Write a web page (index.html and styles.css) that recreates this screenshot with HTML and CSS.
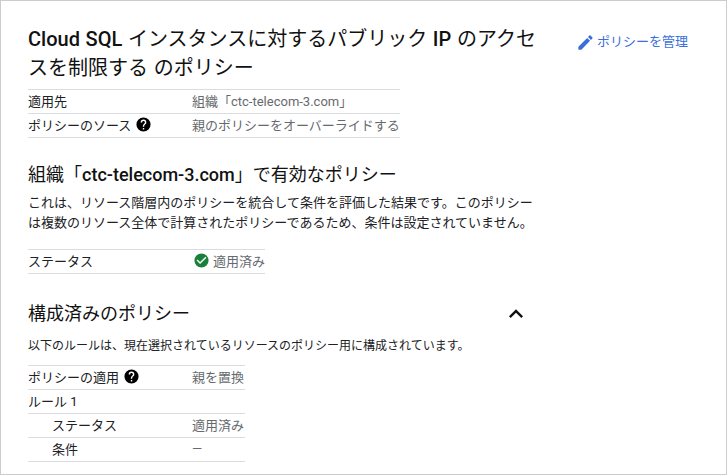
FILE: index.html
```html
<!DOCTYPE html>
<html lang="ja">
<head>
<meta charset="utf-8">
<title>ポリシー</title>
<link rel="stylesheet" href="styles.css">
</head>
<body>
<main class="frame">
  <header class="head">
    <h1 class="title"><b>Cloud SQL</b> インスタンスに対するパブリック <b>IP</b> のアクセスを制限する のポリシー</h1>
    <a class="manage">
      <svg class="pencil" viewBox="0 0 24 24" width="19" height="19"><path d="M3 17.25V21h3.75L17.81 9.94l-3.75-3.75L3 17.25zM20.71 7.04a1 1 0 0 0 0-1.41l-2.34-2.34a1 1 0 0 0-1.41 0l-1.83 1.83 3.75 3.75 1.83-1.83z"/></svg>
      <span>ポリシーを管理</span>
    </a>
  </header>

  <div class="table t1">
    <div class="row"><span class="key">適用先</span><span class="val">組織「ctc-telecom-3.com」</span></div>
    <div class="row"><span class="key">ポリシーのソース
      <svg class="help" viewBox="0 0 24 24" width="17" height="17"><path d="M12 2a10 10 0 1 0 0 20 10 10 0 0 0 0-20zm1 17h-2v-2h2v2zm2.07-7.75-.9.92C13.45 12.9 13 13.5 13 15h-2v-.5c0-1.1.45-2.1 1.17-2.83l1.24-1.26c.37-.36.59-.86.59-1.41 0-1.1-.9-2-2-2s-2 .9-2 2H8a4 4 0 0 1 8 0c0 .88-.36 1.68-.93 2.25z"/></svg></span>
      <span class="val">親のポリシーをオーバーライドする</span></div>
  </div>

  <h2 class="h2 eff">組織「<b>ctc-telecom-3.com</b>」で有効なポリシー</h2>
  <p class="desc">これは、リソース階層内のポリシーを統合して条件を評価した結果です。このポリシーは複数のリソース全体で計算されたポリシーであるため、条件は設定されていません。</p>

  <div class="table t2">
    <div class="row"><span class="key">ステータス</span>
      <span class="val status">
        <svg class="check" viewBox="0 0 24 24" width="17" height="17"><path d="M12 2a10 10 0 1 0 0 20 10 10 0 0 0 0-20zm-2 15-5-5 1.41-1.41L10 14.17l7.59-7.59L19 8l-9 9z"/></svg>
        適用済み</span></div>
  </div>

  <div class="confhead">
    <h2 class="h2">構成済みのポリシー</h2>
    <svg class="chev" viewBox="0 0 24 24" width="28" height="28"><path d="M7.41 15.41 12 10.83l4.59 4.58L18 14l-6-6-6 6z"/></svg>
  </div>
  <p class="desc one">以下のルールは、現在選択されているリソースのポリシー用に構成されています。</p>

  <div class="table t3">
    <div class="row"><span class="key">ポリシーの適用
      <svg class="help" viewBox="0 0 24 24" width="17" height="17"><path d="M12 2a10 10 0 1 0 0 20 10 10 0 0 0 0-20zm1 17h-2v-2h2v2zm2.07-7.75-.9.92C13.45 12.9 13 13.5 13 15h-2v-.5c0-1.1.45-2.1 1.17-2.83l1.24-1.26c.37-.36.59-.86.59-1.41 0-1.1-.9-2-2-2s-2 .9-2 2H8a4 4 0 0 1 8 0c0 .88-.36 1.68-.93 2.25z"/></svg></span>
      <span class="val">親を置換</span></div>
    <div class="row"><span class="key">ルール 1</span></div>
    <div class="row"><span class="key ind">ステータス</span><span class="val">適用済み</span></div>
    <div class="row"><span class="key ind">条件</span><span class="val">—</span></div>
  </div>
</main>
</body>
</html>
```
FILE: styles.css
```css
* { box-sizing: border-box; }
html, body { margin: 0; padding: 0; }
body {
  width: 727px; height: 475px; overflow: hidden; background: #fff;
  font-family: Roboto, "Noto Sans CJK JP", sans-serif;
  color: #202124; font-size: 13px;
}
.frame {
  width: 727px; height: 475px;
  border: 1px solid #ccc;
  padding: 24px 0 0 27px;
}
.head { display: flex; align-items: flex-start; }
.title {
  margin: 0; width: 512px; font-size: 20px; line-height: 29px; font-weight: 400; color: #111;
  word-spacing: 0.7px;
}
.title b, .h2 b { font-weight: 500; }
.manage {
  display: flex; align-items: center; margin: 7px 0 0 36px; gap: 2px;
  color: #3b6fd8; font-size: 13px; line-height: 20px; white-space: nowrap;
}
.pencil { fill: #3b6fd8; flex: none; }
.table { border-top: 1px solid #dadce0; }
.row {
  display: flex; height: 24px; align-items: center; padding-bottom: 2px;
  border-bottom: 1px solid #dadce0; white-space: nowrap;
}
.key { display: flex; align-items: center; gap: 4px; color: #202124; }
.val { color: #666a6e; }
.ind { padding-left: 24px; }
.t1 { width: 372px; margin-top: 6px; }
.t1 .key { width: 164px; }
.t2 { width: 237px; margin-top: 16px; }
.t2 .key { width: 165px; }
.t3 { width: 217px; margin-top: 9px; }
.t3 .key { width: 164px; }
.help { fill: #000; flex: none; }
.status { display: flex; align-items: center; gap: 3px; }
.check { fill: #188038; flex: none; }
.h2 { margin: 0; font-size: 18px; line-height: 24px; font-weight: 400; color: #111; }
.eff { margin-top: 25px; }
.desc { margin: 6px 0 0; width: 510px; line-height: 20px; color: #202124; font-size: 13px; }
.confhead { display: flex; align-items: center; justify-content: space-between; width: 502px; height: 24px; margin-top: 28px; }
.chev { fill: #111; flex: none; }
.one { margin-top: 10px; font-size: 12px; }
```
